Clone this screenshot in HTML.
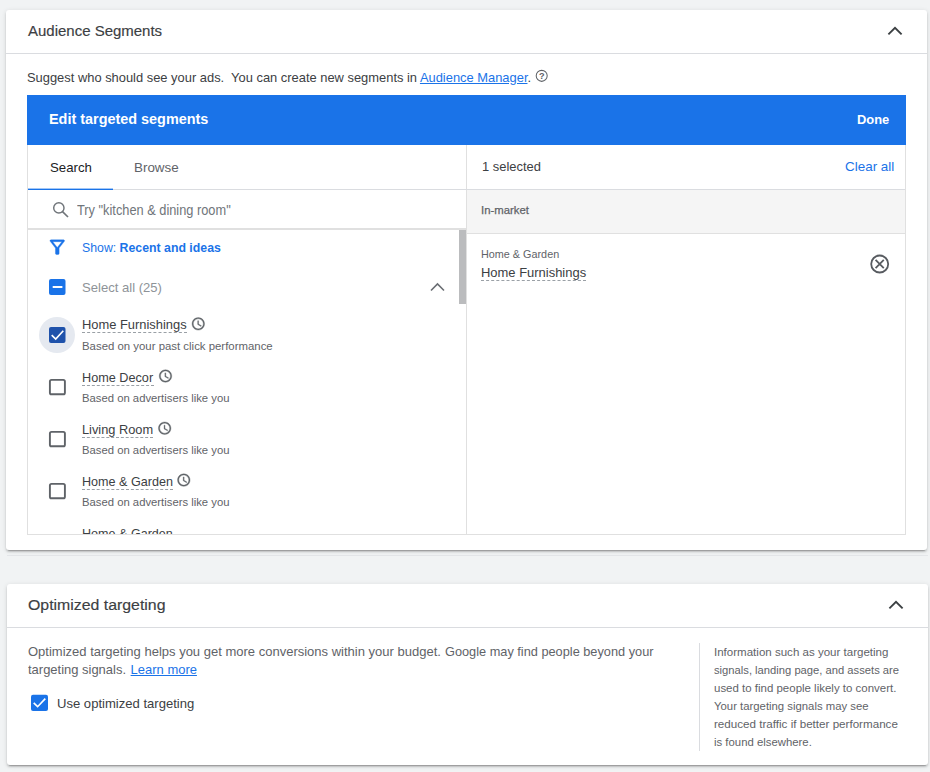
<!DOCTYPE html>
<html lang="en">
<head>
<meta charset="utf-8">
<title>Audience Segments</title>
<style>
html,body{margin:0;padding:0;}
body{width:930px;height:772px;overflow:hidden;background:#f1f3f4;font-family:"Liberation Sans",Arial,sans-serif;color:#3c4043;position:relative;}
.abs{position:absolute;}
.card{position:absolute;background:#fff;border-radius:3px;box-shadow:0 3px 1px -2px rgba(0,0,0,.2),0 2px 2px 0 rgba(0,0,0,.14),0 1px 5px 0 rgba(0,0,0,.12);}
.t{position:absolute;white-space:nowrap;line-height:1;transform-origin:0 0;}
.t a{color:#1a73e8;text-decoration:underline;}
.dash{position:absolute;height:0;border-top:1px dashed #9aa0a6;}
svg{position:absolute;left:0;top:0;overflow:visible;}
</style>
</head>
<body>

<!-- faint separator between sections -->
<div class="abs" style="left:7px;top:555px;width:921px;height:1px;background:#e4e6e9;"></div>

<!-- Card 1 -->
<div class="card" style="left:6px;top:10px;width:921px;height:540px;"></div>
<div class="abs" style="left:6px;top:53px;width:921px;height:1px;background:#dadce0;"></div>

<!-- Blue bar -->
<div class="abs" style="left:27px;top:95px;width:879px;height:50px;background:#1a73e8;"></div>

<!-- panel borders -->
<div class="abs" style="left:27px;top:145px;width:1px;height:390px;background:#e0e0e0;"></div>
<div class="abs" style="left:905px;top:145px;width:1px;height:390px;background:#e0e0e0;"></div>
<div class="abs" style="left:466px;top:145px;width:1px;height:390px;background:#e0e0e0;"></div>
<div class="abs" style="left:27px;top:534px;width:879px;height:1px;background:#e0e0e0;"></div>

<!-- Tabs -->
<div class="abs" style="left:28px;top:189px;width:877px;height:1px;background:#dadce0;"></div>
<div class="abs" style="left:28px;top:189px;width:85px;height:1px;background:#1a73e8;"></div>
<div class="abs" style="left:28px;top:188px;width:85px;height:1px;background:rgba(26,115,232,.4);"></div>

<!-- Search row bottom border -->
<div class="abs" style="left:28px;top:228px;width:438px;height:2px;background:#e0e0e0;"></div>

<!-- scrollbar thumb -->
<div class="abs" style="left:459px;top:230px;width:7px;height:74px;background:#bbbcbe;"></div>

<!-- right panel grey header -->
<div class="abs" style="left:467px;top:190px;width:438px;height:43px;background:#f5f5f5;"></div>
<div class="abs" style="left:467px;top:233px;width:438px;height:1px;background:#e0e0e0;"></div>

<!-- ripple -->
<div class="abs" style="left:39px;top:317px;width:36px;height:36px;border-radius:18px;background:#e5e9f0;"></div>

<!-- Card 2 -->
<div class="card" style="left:7px;top:584px;width:921px;height:181px;"></div>
<div class="abs" style="left:7px;top:627px;width:921px;height:1px;background:#dadce0;"></div>
<div class="abs" style="left:699px;top:643px;width:1px;height:108px;background:#dadce0;"></div>

<!-- dashed underlines -->
<div class="dash" style="left:82px;top:332px;width:105px;"></div>
<div class="dash" style="left:82px;top:385px;width:72px;"></div>
<div class="dash" style="left:82px;top:437px;width:71px;"></div>
<div class="dash" style="left:82px;top:489px;width:91px;"></div>
<div class="dash" style="left:481px;top:280px;width:105px;"></div>

<!-- clipped 5th item -->
<div class="abs" style="left:80px;top:520px;width:200px;height:14px;overflow:hidden;"><div class="t" id="i5n" style="left:2.3px;top:7px;font-size:13px;color:#3c4043;transform:scaleX(.967);">Home &amp; Garden</div></div>

<div class="t" id="title1" style="left:27.84px;top:24px;font-size:14px;color:#3c4043;-webkit-text-stroke:.15px #3c4043;transform:scaleX(1.0702);">Audience Segments</div>
<div class="t" id="suggest" style="left:26.65px;top:71px;font-size:13px;color:#3c4043;transform:scaleX(0.9921);">Suggest who should see your ads.&nbsp; You can create new segments in <a>Audience Manager</a>.</div>
<div class="t" id="edit" style="left:49.24px;top:112px;font-size:14px;color:#fff;font-weight:bold;transform:scaleX(1.0292);">Edit targeted segments</div>
<div class="t" id="done" style="left:856.96px;top:113px;font-size:13px;color:#fff;font-weight:bold;transform:scaleX(0.9929);">Done</div>
<div class="t" id="clearall" style="left:844.96px;top:160px;font-size:13px;color:#1a73e8;transform:scaleX(1.0333);">Clear all</div>
<div class="t" id="tsearch" style="left:49.62px;top:161px;font-size:13px;color:#202124;transform:scaleX(1.0162);">Search</div>
<div class="t" id="tbrowse" style="left:133.60px;top:161px;font-size:13px;color:#5f6368;transform:scaleX(1.0318);">Browse</div>
<div class="t" id="try" style="left:77.43px;top:203px;font-size:14px;color:#70757a;transform:scaleX(0.9140);">Try "kitchen &amp; dining room"</div>
<div class="t" id="show" style="left:81.82px;top:241px;font-size:13px;color:#1a73e8;transform:scaleX(0.9464);">Show: <b>Recent and ideas</b></div>
<div class="t" id="selall" style="left:81.80px;top:281px;font-size:13px;color:#8e9398;transform:scaleX(1.0059);">Select all (25)</div>
<div class="t" id="i1n" style="left:82.21px;top:318px;font-size:13px;color:#3c4043;transform:scaleX(0.9918);">Home Furnishings</div>
<div class="t" id="i1s" style="left:82.25px;top:341px;font-size:11.5px;color:#5f6368;transform:scaleX(0.9910);">Based on your past click performance</div>
<div class="t" id="i2n" style="left:82.16px;top:371px;font-size:13px;color:#3c4043;transform:scaleX(0.9749);">Home Decor</div>
<div class="t" id="i2s" style="left:82.26px;top:393px;font-size:11.5px;color:#5f6368;transform:scaleX(0.9818);">Based on advertisers like you</div>
<div class="t" id="i3n" style="left:82.15px;top:423px;font-size:13px;color:#3c4043;transform:scaleX(0.9840);">Living Room</div>
<div class="t" id="i3s" style="left:82.26px;top:445px;font-size:11.5px;color:#5f6368;transform:scaleX(0.9818);">Based on advertisers like you</div>
<div class="t" id="i4n" style="left:82.25px;top:475px;font-size:13px;color:#3c4043;transform:scaleX(0.9678);">Home &amp; Garden</div>
<div class="t" id="i4s" style="left:82.26px;top:497px;font-size:11.5px;color:#5f6368;transform:scaleX(0.9818);">Based on advertisers like you</div>
<div class="t" id="rsel" style="left:482.05px;top:160px;font-size:13px;color:#3c4043;transform:scaleX(0.9928);">1 selected</div>
<div class="t" id="inm" style="left:481.28px;top:205px;font-size:11.5px;color:#5f6368;-webkit-text-stroke:.25px #5f6368;transform:scaleX(0.9853);">In-market</div>
<div class="t" id="rcat" style="left:481.44px;top:249px;font-size:11px;color:#5f6368;transform:scaleX(0.9834);">Home &amp; Garden</div>
<div class="t" id="rname" style="left:481.21px;top:266px;font-size:13px;color:#3c4043;transform:scaleX(0.9966);">Home Furnishings</div>
<div class="t" id="title2" style="left:28.26px;top:598px;font-size:14px;color:#3c4043;-webkit-text-stroke:.15px #3c4043;transform:scaleX(1.1326);">Optimized targeting</div>
<div class="t" id="para1" style="left:28.24px;top:645px;font-size:13px;color:#5f6368;transform:scaleX(1.0007);">Optimized targeting helps you get more conversions within your budget.</div>
<div class="t" id="para1b" style="left:445.24px;top:645px;font-size:13px;color:#5f6368;transform:scaleX(0.9812);">Google may find people beyond your</div>
<div class="t" id="para2" style="left:28.40px;top:663px;font-size:13px;color:#5f6368;transform:scaleX(0.9972);">targeting signals. <a style="margin-left:1px">Learn more</a></div>
<div class="t" id="use" style="left:56.61px;top:697px;font-size:13px;color:#3c4043;transform:scaleX(1.0051);">Use optimized targeting</div>
<div class="t" id="inf1" style="left:713.61px;top:647px;font-size:11.5px;color:#5f6368;transform:scaleX(1.0033);">Information such as your targeting</div>
<div class="t" id="inf2" style="left:714.38px;top:665px;font-size:11.5px;color:#5f6368;transform:scaleX(0.9747);">signals, landing page, and assets are</div>
<div class="t" id="inf3" style="left:714.32px;top:683px;font-size:11.5px;color:#5f6368;transform:scaleX(0.9974);">used to find people likely to convert.</div>
<div class="t" id="inf4" style="left:714.45px;top:701px;font-size:11.5px;color:#5f6368;transform:scaleX(0.9857);">Your targeting signals may see</div>
<div class="t" id="inf5" style="left:714.18px;top:719px;font-size:11.5px;color:#5f6368;transform:scaleX(1.0105);">reduced traffic if better performance</div>
<div class="t" id="inf6" style="left:714.16px;top:737px;font-size:11.5px;color:#5f6368;transform:scaleX(0.9872);">is found elsewhere.</div>

<svg width="930" height="772" viewBox="0 0 930 772">
  <!-- header chevrons -->
  <path d="M888.4 34.4 L895 27.8 L901.6 34.4" fill="none" stroke="#3c4043" stroke-width="1.9"/>
  <path d="M889.4 608.4 L896 601.8 L902.6 608.4" fill="none" stroke="#3c4043" stroke-width="1.9"/>
  <!-- list chevron -->
  <path d="M431 290.5 L437.5 284 L444 290.5" fill="none" stroke="#6a6e73" stroke-width="1.6"/>
  <!-- help icon -->
  <circle cx="541.7" cy="75.85" r="5.5" fill="none" stroke="#5f6368" stroke-width="1.05"/>
  <text x="541.7" y="79" font-size="9.2" font-weight="bold" text-anchor="middle" fill="#5f6368" font-family="Liberation Sans, sans-serif">?</text>
  <!-- search icon -->
  <circle cx="58.85" cy="207.9" r="5.15" fill="none" stroke="#70757a" stroke-width="1.45"/>
  <path d="M62.5 211.6 L68.0 217.0" stroke="#70757a" stroke-width="1.7"/>
  <!-- filter icon -->
  <g transform="translate(46.3 236.2) scale(0.916)"><path fill="#1a73e8" stroke="#1a73e8" stroke-width=".4" d="M7 6h10l-5.01 6.3L7 6zm-2.75-.39C6.27 8.2 10 13 10 13v6c0 .55.45 1 1 1h2c.55 0 1-.45 1-1v-6s3.72-4.8 5.74-7.39A.998.998 0 0 0 18.95 4H5.04c-.83 0-1.3.95-.79 1.61z"/></g>
  <!-- select-all (indeterminate) -->
  <rect x="49" y="279" width="16.5" height="16" rx="2" fill="#1a73e8"/>
  <rect x="52.7" y="286" width="9.7" height="2" fill="#fff"/>
  <!-- checked dark -->
  <rect x="49" y="326.9" width="16.5" height="16.1" rx="2" fill="#1f52ab"/>
  <path d="M51.7 335.2 L55.7 339 L63.3 330.8" fill="none" stroke="#fff" stroke-width="1.65"/>
  <!-- unchecked boxes -->
  <rect x="49.9" y="379.9" width="15" height="14.4" rx="1.6" fill="none" stroke="#5f6368" stroke-width="1.9"/>
  <rect x="49.9" y="431.9" width="15" height="14.4" rx="1.6" fill="none" stroke="#5f6368" stroke-width="1.9"/>
  <rect x="49.9" y="483.9" width="15" height="14.4" rx="1.6" fill="none" stroke="#5f6368" stroke-width="1.9"/>
  <!-- clocks (material schedule, 15px) -->
  <!-- remove icon -->
  <circle cx="879.7" cy="264" r="8.5" fill="none" stroke="#575b60" stroke-width="1.8"/>
  <path d="M875.6 259.9 L883.8 268.1 M883.8 259.9 L875.6 268.1" stroke="#575b60" stroke-width="1.8"/>
  <!-- optimized checkbox -->
  <rect x="31" y="694.7" width="17" height="16.3" rx="2" fill="#1a73e8"/>
  <path d="M33.7 702.9 L37.6 706.7 L45.3 698.6" fill="none" stroke="#fff" stroke-width="1.65"/>
</svg>
<svg width="930" height="772" viewBox="0 0 930 772">
  <path fill="#5f6368" stroke="#5f6368" stroke-width=".55" transform="translate(190.8 316.35) scale(0.625)" d="M11.99 2C6.47 2 2 6.48 2 12s4.47 10 9.99 10C17.52 22 22 17.52 22 12S17.52 2 11.99 2zM12 20c-4.42 0-8-3.58-8-8s3.58-8 8-8 8 3.58 8 8-3.58 8-8 8zm.5-13H11v6l5.25 3.15.75-1.23-4.5-2.67z" />
  <path fill="#5f6368" stroke="#5f6368" stroke-width=".55" transform="translate(158 368.5) scale(0.625)" d="M11.99 2C6.47 2 2 6.48 2 12s4.47 10 9.99 10C17.52 22 22 17.52 22 12S17.52 2 11.99 2zM12 20c-4.42 0-8-3.58-8-8s3.58-8 8-8 8 3.58 8 8-3.58 8-8 8zm.5-13H11v6l5.25 3.15.75-1.23-4.5-2.67z" />
  <path fill="#5f6368" stroke="#5f6368" stroke-width=".55" transform="translate(157.2 420.75) scale(0.625)" d="M11.99 2C6.47 2 2 6.48 2 12s4.47 10 9.99 10C17.52 22 22 17.52 22 12S17.52 2 11.99 2zM12 20c-4.42 0-8-3.58-8-8s3.58-8 8-8 8 3.58 8 8-3.58 8-8 8zm.5-13H11v6l5.25 3.15.75-1.23-4.5-2.67z" />
  <path fill="#5f6368" stroke="#5f6368" stroke-width=".55" transform="translate(176.3 472.6) scale(0.625)" d="M11.99 2C6.47 2 2 6.48 2 12s4.47 10 9.99 10C17.52 22 22 17.52 22 12S17.52 2 11.99 2zM12 20c-4.42 0-8-3.58-8-8s3.58-8 8-8 8 3.58 8 8-3.58 8-8 8zm.5-13H11v6l5.25 3.15.75-1.23-4.5-2.67z" />
</svg>

</body>
</html>
